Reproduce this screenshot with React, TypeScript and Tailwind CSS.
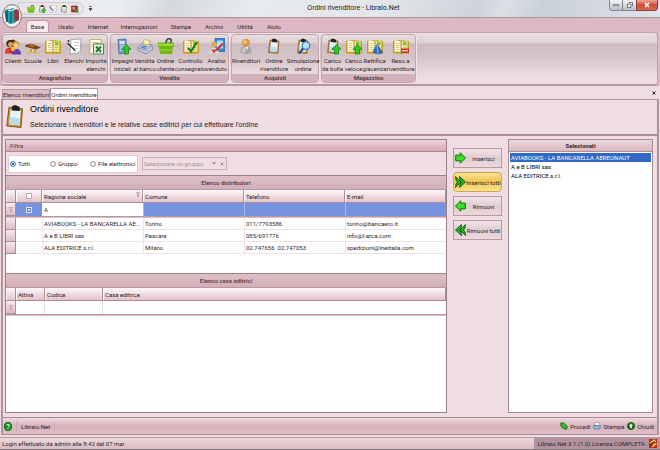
import { useState } from "react";
import type { ReactNode } from "react";

function Svg({ children, className = "h-4 w-4", box = "0 0 16 16" }: { children: ReactNode; className?: string; box?: string }) {
  return (
    <svg viewBox={box} className={`shrink-0 ${className}`} aria-hidden="true">
      {children}
    </svg>
  );
}

const openBook = (
  <>
    <path d="M0 2.500 L7 1.500 L8 2.500 L9 1.500 L16 2.500 V15 H9.500 L8 15.700 L6.500 15 H0Z" fill="#c99a1e" />
    <path d="M1.500 2.500 Q5 1 8 3.500 V14 Q5 12.200 1.500 13.500Z" fill="#fdf8da" />
    <path d="M14.500 2.500 Q11 1 8 3.500 V14 Q11 12.200 14.500 13.500Z" fill="#f3e8a4" />
    <path d="M3 5h3.500M3 7h3.500M3 9h3.500M3 11h3.500" stroke="#c5b475" strokeWidth=".7" />
    <path d="M8 3.500V14" stroke="#a87d14" strokeWidth=".9" />
    <path d="M10 3h3.500v4h-3.500z" fill="#7fc241" />
    <path d="M10 9h3.500M10 11h3.500" stroke="#b9a65e" strokeWidth=".7" />
  </>
);

const clipboard = (
  <>
    <path d="M4 1.500 L13 2.500 L12 15 L2.500 14Z" fill="#c98a2b" stroke="#7b5018" strokeWidth=".6" />
    <path d="M5 3 L11.800 3.700 L11 13.600 L4 12.800Z" fill="#e7f4fc" />
    <path d="M4.500 8 L11.400 9 L11 13.600 L4 12.800Z" fill="#b5dcf3" />
    <path d="M6 .8 L8 0 L11 1.200 L11.200 4 L5.800 3.600Z" fill="#1e2226" />
  </>
);

const upArrow = <path d="M11.500 6 L16 10.800 H13.500 V15.500 H9.500 V10.800 H7Z" fill="#2ecc1f" stroke="#0c720c" strokeWidth=".7" />;

const icons: Record<string, ReactNode> = {
  clients: (
    <>
      <path d="M5 3 Q8 -1 11 3 L13 6 L8 9 L3 7Z" fill="#573012" />
      <circle cx="5" cy="5" r="3.600" fill="#3d2412" />
      <circle cx="5.500" cy="6" r="2.400" fill="#e2a560" />
      <circle cx="11" cy="6" r="3.300" fill="#d6a029" />
      <circle cx="11" cy="7" r="2.200" fill="#f5cf94" />
      <path d="M0 15 Q0 9 5 9 Q9 9 9 15Z" fill="#c3242a" />
      <path d="M7 16 Q7 10.500 11.500 10.500 Q16 10.500 16 16Z" fill="#6a38ae" />
      <circle cx="3" cy="12.500" r="2.400" fill="#ee3b35" />
      <circle cx="8" cy="10.500" r="2.200" fill="#f0c437" />
    </>
  ),
  school: (
    <>
      <path d="M0 7 Q5 4 9 6 L16 9 L11 11 Q5 9.500 0 8Z" fill="#7b4715" />
      <path d="M3 6.500 Q7 4.500 10 7 L8 9Z" fill="#a96d2c" />
      <path d="M3 10.500 L13 12 L12 14 L4 13.500Z" fill="#e6cd7a" />
      <path d="M1 14.500h14" stroke="#c2bd6c" strokeWidth="1.500" strokeDasharray="2 .6" />
      <path d="M6 10.500v3M10 11v3" stroke="#8c5d2c" strokeWidth=".8" />
    </>
  ),
  book: openBook,
  list: (
    <>
      <path d="M5 1 L15 .5 L14 14 L4 15.500Z" fill="#fff" stroke="#8f98a4" strokeWidth=".8" />
      <path d="M8 4h5M8 7h5M7 10h5" stroke="#b8c0ce" strokeWidth=".8" />
      <path d="M2 4 L9 11 L10 13 L8 12 L1 5Z" fill="#2d3339" />
      <circle cx="2.500" cy="2.500" r="1" fill="#333" />
      <path d="M11 13 L14.500 11.500 L14 15Z" fill="#d0d5de" />
    </>
  ),
  excel: (
    <>
      <path d="M2 1h11v4H8v10H2z" fill="#fffceb" stroke="#b4975c" strokeWidth=".7" />
      <path d="M3.500 4h7M3.500 6h4M3.500 8h3" stroke="#d2b36b" strokeWidth=".8" />
      <path d="M5.500 5.500h10v10h-10z" fill="#eaf7e8" stroke="#3f8f4a" />
      <path d="M8 8l5 5.500M13 8l-5 5.500" stroke="#207a30" strokeWidth="2" />
    </>
  ),
  phone: (
    <>
      <path d="M3 1 L11 .5 L11.500 14 L4 15.500Z" fill="#7a9fd0" stroke="#41659b" strokeWidth=".8" />
      <path d="M4.500 2.500h5v3h-5z" fill="#d4ebff" />
      <path d="M5 7.500h5M5 9.500h5M5 11.500h4" stroke="#e9f2ff" strokeWidth="1.200" strokeDasharray="1.300 .7" />
      {upArrow}
    </>
  ),
  till: (
    <>
      <path d="M1 9 L6 4 L15 6.500 L15.500 11 L9 15.500 L1 12Z" fill="#c0c9dd" stroke="#6c7895" strokeWidth=".7" />
      <path d="M1 9 L9 12 L15 6.500" fill="none" stroke="#7887aa" strokeWidth=".8" />
      <path d="M7 1 L13 2 L12 6.500 L6 5Z" fill="#fff4b0" stroke="#b59a3c" strokeWidth=".6" />
      <path d="M5 7l5 1.500M4 8.500l5 1.500" stroke="#4765ad" />
    </>
  ),
  basket: (
    <>
      <path d="M8 5 Q8 0 12 0 Q14.500 1 12 5" fill="none" stroke="#38473e" strokeWidth="1.500" />
      <path d="M0 4.500h16v3.500H0z" fill="#9bdf22" stroke="#4b8f0c" strokeWidth=".6" />
      <path d="M1 8h14l-1 7.500H2z" fill="#6fb915" />
      <path d="M2 11.500h12" stroke="#8ed02f" strokeWidth="1.500" />
    </>
  ),
  bookCheck: (
    <>
      {openBook}
      <path d="M5 9.500 L8 13 L14 3.500" fill="none" stroke="#15801e" strokeWidth="2.200" />
    </>
  ),
  chart: (
    <>
      <path d="M6 0h10v13H6z" fill="#3488d6" stroke="#195189" strokeWidth=".6" />
      <path d="M8 2h6v8H8z" fill="#acdcff" />
      <circle cx="5" cy="6" r="3" fill="#e7a563" />
      <path d="M0 15 Q1 9 5 9 Q9 9 10 15Z" fill="#d8dee9" />
      <path d="M7 12 L14 5" stroke="#d82525" strokeWidth="2" />
      <path d="M2 11 L5 15 L8 11Z" fill="#db4330" />
    </>
  ),
  person: (
    <>
      <path d="M2.500 14 Q2 7.500 8 7.500 Q14 7.500 13.500 14 Q8 17.500 2.500 14Z" fill="#a4a5aa" />
      <path d="M4 13 Q4 9 7 8.500 L7 15Z" fill="#c9cacf" />
      <path d="M7.500 8.500 L10 8.500 L9 12Z" fill="#fff" />
      <circle cx="8" cy="4.200" r="3.900" fill="#d79a45" />
      <circle cx="7" cy="3.500" r="2" fill="#f1c278" />
    </>
  ),
  clip: clipboard,
  clipSearch: (
    <>
      {clipboard}
      <path d="M8.500 9.500 L4 15" stroke="#244f89" strokeWidth="2" />
      <circle cx="11" cy="7" r="3.800" fill="#b9e2ff" fillOpacity=".9" stroke="#3b75b4" strokeWidth="1.200" />
    </>
  ),
  clipUp: (
    <>
      {clipboard}
      {upArrow}
    </>
  ),
  bookUp: (
    <>
      {openBook}
      {upArrow}
    </>
  ),
  bookEdit: (
    <>
      {openBook}
      <path d="M10 6 L15.500 14 L11 15.500 L6 13.500Z" fill="#2f70d7" stroke="#173f91" strokeWidth=".7" />
      <path d="M10 6 L11 15.500" stroke="#8cbcff" />
    </>
  ),
  bookMinus: (
    <>
      {openBook}
      <path d="M8 10h8v4.500H8z" fill="#cf2b22" />
      <path d="M9 12.200h6" stroke="#fff" strokeWidth="1.200" />
    </>
  ),
  redBook: (
    <>
      <path d="M1 2h12v12H1z" fill="#a33a35" stroke="#5e1d1c" />
      <path d="M3 4h5v5H3z" fill="#d99a56" />
      <path d="M9 9h6v6H9z" fill="#4f9a32" />
    </>
  ),
};

type Tool = { icon: string; label: [string, string?]; width: string };
type Group = { title: string; width: string; tools: Tool[] };

const groups: Group[] = [
  {
    title: "Anagrafiche",
    width: "w-[106px]",
    tools: [
      { icon: "clients", label: ["Clienti"], width: "w-5" },
      { icon: "school", label: ["Scuole"], width: "w-5" },
      { icon: "book", label: ["Libri"], width: "w-5" },
      { icon: "list", label: ["Elenchi"], width: "w-[22px]" },
      { icon: "excel", label: ["Importa", "elenchi"], width: "w-[22px]" },
    ],
  },
  {
    title: "Vendite",
    width: "w-[119px]",
    tools: [
      { icon: "phone", label: ["Impegni", "iniziali"], width: "w-[22px]" },
      { icon: "till", label: ["Vendita", "al banco"], width: "w-[22px]" },
      { icon: "basket", label: ["Ordine", "cliente"], width: "w-5" },
      { icon: "bookCheck", label: ["Controllo", "consegnato"], width: "w-[30px]" },
      { icon: "chart", label: ["Analisi", "venduto"], width: "w-[22px]" },
    ],
  },
  {
    title: "Acquisti",
    width: "w-[88px]",
    tools: [
      { icon: "person", label: ["Rivenditori"], width: "w-7" },
      { icon: "clip", label: ["Ordine", "rivenditore"], width: "w-7" },
      { icon: "clipSearch", label: ["Simulazione", "ordine"], width: "w-[30px]" },
    ],
  },
  {
    title: "Magazzino",
    width: "w-[95px]",
    tools: [
      { icon: "clipUp", label: ["Carico", "da bolla"], width: "w-[22px]" },
      { icon: "bookUp", label: ["Carico", "veloce"], width: "w-5" },
      { icon: "bookEdit", label: ["Rettifica", "giacenza"], width: "w-[22px]" },
      { icon: "bookMinus", label: ["Reso a", "rivenditore"], width: "w-[30px]" },
    ],
  },
];

const menu = [
  { name: "Base", width: "w-[23px]" },
  { name: "Usato", width: "w-[34px]" },
  { name: "Internet", width: "w-[30px]" },
  { name: "Interrogazioni", width: "w-[52px]" },
  { name: "Stampe", width: "w-8" },
  { name: "Archivi", width: "w-[34px]" },
  { name: "Utilità", width: "w-7" },
  { name: "Aiuto", width: "w-[30px]" },
];

const distributors = [
  ["AVIABOOKS - LA BANCARELLA AEREONAUT", "Torino", "011/7793586", "torino@bancaero.it"],
  ["A e B LIBRI sas", "Pescara", "085/691776", "info@l-arca.com"],
  ["ALA EDITRICE s.r.l.", "Milano", "02.747656  02.747053", "spedizioni@lneitalia.com"],
];

const headCell =
  "h-[13px] border-r border-b border-[#b08d96] bg-linear-to-b from-[#fdf8f9] to-[#e3c3ca] px-0.5 text-left font-normal text-[#221a1d] shadow-[inset_1px_0_#ffffff]";
const markCell = "border-r border-b border-[#b08d96] bg-linear-to-b from-[#f8eaed] to-[#ddbdc5] p-0";

function Funnel({ className = "" }: { className?: string }) {
  return (
    <Svg className={`h-[5px] w-1 ${className}`} box="0 0 4 5">
      <path d="M.5 .5h3L2.500 2.500v2h-1v-2z" fill="#f6e8ec" stroke="#8f6f79" strokeWidth=".5" />
    </Svg>
  );
}

function SectionTitle({ children }: { children: ReactNode }) {
  return (
    <h2 className="flex h-[15px] items-center justify-center border-y border-t-[#a0828b] border-b-[#bb98a1] bg-linear-to-b from-[#dfbfc6] to-[#d2afb8] font-bold text-[#6e434f]">
      {children}
    </h2>
  );
}

function MoveArrow({ left, double }: { left?: boolean; double?: boolean }) {
  return (
    <Svg className={`h-3 w-[11px] ${left ? "-scale-x-100" : ""}`} box="0 0 11 12">
      {double ? (
        <g fill="#22b51c" stroke="#0a5a10" strokeWidth=".9">
          <path d="M.5 .5 L6 6 L.5 11.500 L1 8 L2.500 6 L1 4Z" />
          <path d="M4.500 .5 L10.500 6 L4.500 11.500 L5 8 L6.500 6 L5 4Z" />
        </g>
      ) : (
        <path d="M.7 3.200h4.500V.8L10.500 6 L5.200 11.200V8.800H.7z" fill="#37e222" stroke="#0b7010" />
      )}
    </Svg>
  );
}

const moves = [
  { label: "Inserisci", left: false, double: false },
  { label: "Inserisci tutti", left: false, double: true },
  { label: "Rimuovi", left: true, double: false },
  { label: "Rimuovi tutti", left: true, double: true },
];

function TitleBar() {
  const quick = ["basket", "clipUp", "list", "clip", "redBook"];
  return (
    <header className="relative flex h-[17px] shrink-0 items-center justify-between bg-[linear-gradient(115deg,#e3e2e6_0%,#eceff1_18%,#d5d9df_26%,#e8ebee_38%,#e2e6ea_58%,#cdd3d9_72%,#dbe0e5_76%,#c9d0d7_82%,#dfe4e8_100%)]">
      <div className="ml-[18px] flex h-[13px] items-center gap-[3px] rounded-r-full border border-[#d2cbd1] bg-[#e9e4e8] pr-1 pl-2">
        {quick.map((name) => (
          <button key={name} type="button" aria-label={name} className="block">
            <Svg className="h-2 w-2">{icons[name]}</Svg>
          </button>
        ))}
      </div>
      <button type="button" aria-label="Personalizza" className="ml-1 block">
        <Svg className="h-[5px] w-[5px]" box="0 0 5 5">
          <path d="M1 .5h3M1 2.500h3L2.500 4.500z" stroke="#444" strokeWidth=".7" />
        </Svg>
      </button>
      <h1 className="flex-1 pl-[126px] text-center text-[7px] text-[#1c1c1c]">Ordini rivenditore - Libraio.Net</h1>
      <div className="mr-0.5 flex h-[11px] w-[170px] justify-end self-start">
        <button type="button" aria-label="Riduci" className="flex w-3.5 items-center justify-center rounded-bl-sm border border-t-0 border-[#85898f] bg-linear-to-b from-[#f5f6f8] to-[#b9bfc8]">
          <Svg className="h-1 w-1.5" box="0 0 6 4"><path d="M.5 1.500h5v1.500h-5z" fill="#fff" stroke="#555" strokeWidth=".7" /></Svg>
        </button>
        <button type="button" aria-label="Ripristina" className="flex w-[13px] items-center justify-center border-b border-[#85898f] bg-linear-to-b from-[#f5f6f8] to-[#b9bfc8]">
          <Svg className="h-1.5 w-1.5" box="0 0 6 6"><path d="M2 .5h3.500v3.500M.5 2h3.500v3.500h-3.500z" fill="#fff" stroke="#555" strokeWidth=".8" /></Svg>
        </button>
        <button type="button" aria-label="Chiudi finestra" className="flex w-[22px] items-center justify-center rounded-br-sm border border-t-0 border-[#8b4138] bg-linear-to-b from-[#e9a99b] via-[#cf4a34] to-[#d66a52]">
          <Svg className="h-1.5 w-1.5" box="0 0 6 6"><path d="M1 1l4 4M5 1l-4 4" stroke="#fff" strokeWidth="1.500" /></Svg>
        </button>
      </div>
      <button type="button" aria-label="Menu principale" className="absolute top-1 left-0.5 z-10 block">
        <Svg className="h-6 w-5" box="0 0 20 24">
          <ellipse cx="10" cy="12" rx="9.500" ry="11.500" fill="#e4dfe2" stroke="#8b7c82" />
          <ellipse cx="10" cy="12" rx="8.200" ry="10.200" fill="#f5f1f3" />
          <path d="M2.500 7 L6 5 L8 6 V19 L4 17.500Z" fill="#17757e" />
          <path d="M6 6 L11 4 L13 5 V19 L8 20 L6 19Z" fill="#269fa6" />
          <path d="M12 6 L15 5 L17 7 V16 L12.500 18.500Z" fill="#8e3a3f" />
          <path d="M9 7v12M5 8v9.500" stroke="#0b4a56" />
          <path d="M6 6l3 1 4-2" fill="none" stroke="#e8ffff" />
        </Svg>
      </button>
    </header>
  );
}

function Ribbon() {
  return (
    <>
      <nav className="flex h-[15px] shrink-0 items-end border-t border-[#a9959b] bg-[#dcb9c2] pl-[26px]">
        {menu.map((m, i) => (
          <button
            key={m.name}
            type="button"
            className={`h-3 shrink-0 whitespace-nowrap text-center ${m.width} ${
              i === 0 ? "rounded-t-sm border border-b-0 border-[#bf9aa4] bg-[#f6e8eb]" : ""
            }`}
          >
            {m.name}
          </button>
        ))}
      </nav>
      <div className="shrink-0 bg-[#dcb9c2] pr-0.5 pl-px">
        <div className="flex h-[54px] gap-0.5 rounded-sm border border-b-2 border-[#c4a2ab] border-b-[#b39aa1] bg-[linear-gradient(to_bottom,#eadfe1_0%,#e0d2d5_18%,#cdbbbf_22%,#d3c3c7_45%,#eadade_80%,#efdde1_100%)] pt-px pb-px">
          {groups.map((g) => (
            <section key={g.title} className={`flex shrink-0 flex-col rounded-sm border border-[#c3a6ae] shadow-[1px_0_#f3e6e9] ${g.width}`}>
              <div className="flex flex-1 items-start justify-center pt-[3px]">
                {g.tools.map((t) => (
                  <button key={t.label.join(" ")} type="button" className={`flex shrink-0 flex-col items-center ${t.width}`}>
                    <Svg className="h-[17px] w-4">{icons[t.icon]}</Svg>
                    <span className="mt-0.5 leading-2 whitespace-nowrap">
                      {t.label[0]}
                      {t.label[1] && (
                        <>
                          <br />
                          {t.label[1]}
                        </>
                      )}
                    </span>
                  </button>
                ))}
              </div>
              <h2 className="h-2 bg-[#d3b3bb] text-center leading-2 font-bold text-[#553f46]">{g.title}</h2>
            </section>
          ))}
        </div>
      </div>
    </>
  );
}

function Filter() {
  const [mode, setMode] = useState("Tutti");
  const options = [
    { name: "Tutti", width: "w-10" },
    { name: "Gruppo", width: "w-10" },
    { name: "File elettronici", width: "w-auto" },
  ];
  return (
    <section>
      <h2 className="flex h-3 items-center border-b border-[#a88b93] bg-linear-to-b from-[#ecd6db] to-[#d4a9b4] pl-1 text-[#4c3a40]">Filtra</h2>
      <div className="flex h-[23px] items-center gap-1 pl-0.5">
        <fieldset className="flex h-[18px] w-[130px] items-center border border-[#dfcdd2] bg-white pl-px">
          {options.map((o) => (
            <label key={o.name} className={`flex items-center gap-0.5 whitespace-nowrap ${o.width}`}>
              <input
                type="radio"
                name="filtro"
                checked={mode === o.name}
                onChange={() => setMode(o.name)}
                className="h-1.5 w-1.5 appearance-none rounded-full border border-[#8f9aa5] bg-[#f0f0f0] checked:border-[#5b87a8] checked:bg-[radial-gradient(#1f6b9e_45%,#cfe4f2_50%)]"
              />
              {o.name}
            </label>
          ))}
        </fieldset>
        <div className="flex h-[13px] w-[85px] items-center border border-[#c9b0b7] text-[#a5939a]">
          <select disabled aria-label="Gruppo" className="h-full flex-1 appearance-none px-px">
            <option>Selezionare un gruppo</option>
          </select>
          <Svg className="mx-0.5 h-[3px] w-1" box="0 0 4 3"><path d="M0 .5h4L2 2.500z" fill="#8f7a82" /></Svg>
          <Svg className="mx-0.5 h-1 w-1" box="0 0 4 4"><path d="M.5 .5l3 3M3.500 .5l-3 3" stroke="#8f7a82" strokeWidth=".8" /></Svg>
        </div>
      </div>
    </section>
  );
}

function Distributors() {
  return (
    <section className="min-h-[98px]">
      <SectionTitle>Elenco distributori</SectionTitle>
      <table className="w-full table-fixed border-separate border-spacing-0">
        <colgroup>
          <col className="w-[10px]" />
          <col className="w-[26px]" />
          <col />
          <col />
          <col />
          <col />
        </colgroup>
        <thead>
          <tr>
            <th className={headCell} />
            <th className={headCell}>
              <input type="checkbox" aria-label="Seleziona tutti" className="mx-auto block h-1.5 w-1.5 appearance-none border border-[#b5b0b8] bg-white" />
            </th>
            <th className={headCell}>
              <span className="flex items-start justify-between">
                Ragione sociale
                <Funnel />
              </span>
            </th>
            <th className={headCell}>Comune</th>
            <th className={headCell}>Telefono</th>
            <th className={headCell}>E-mail</th>
          </tr>
        </thead>
        <tbody>
          <tr>
            <td className={`${markCell} h-[13px]`}><Funnel className="mx-auto" /></td>
            <td className="bg-[#7793df] p-0">
              <input type="checkbox" aria-label="Filtro selezione" className="mx-auto block h-1.5 w-1.5 appearance-none border border-[#dfe7fa] bg-[radial-gradient(#dfe7fa_30%,#5f7cc4_35%)]" />
            </td>
            <td className="bg-white p-0">
              <input aria-label="Filtro ragione sociale" defaultValue="A" className="block h-[13px] w-full px-0.5 outline-none" />
            </td>
            {[0, 1, 2].map((n) => (
              <td key={n} className="border-l border-[#a9b9ea] bg-[#7793df]" />
            ))}
          </tr>
          <tr>
            <td colSpan={6} className="h-0.5 border-t border-[#b9979f] bg-[#dcc0c7] p-0" />
          </tr>
          {distributors.map((row) => (
            <tr key={row[0]}>
              <td className={`${markCell} h-3`} />
              <td className="border-b border-[#f0e2e5] p-0" />
              {row.map((cell) => (
                <td key={cell} className="truncate border-b border-l border-[#f0e2e5] px-px py-0 whitespace-pre">
                  {cell}
                </td>
              ))}
            </tr>
          ))}
        </tbody>
      </table>
    </section>
  );
}

function Publishers() {
  return (
    <section className="flex-1">
      <SectionTitle>Elenco case editrici</SectionTitle>
      <table className="w-full table-fixed border-separate border-spacing-0">
        <colgroup>
          <col className="w-[10px]" />
          <col className="w-[29px]" />
          <col className="w-[58px]" />
          <col />
        </colgroup>
        <thead>
          <tr>
            <th className={headCell} />
            <th className={headCell}>Attiva</th>
            <th className={headCell}>Codice</th>
            <th className={headCell}>Casa editrice</th>
          </tr>
        </thead>
        <tbody>
          <tr>
            <td className={`${markCell} h-[13px]`}><Funnel className="mx-auto" /></td>
            <td className="border-r border-[#ead9dd]" />
            <td className="border-r border-[#ead9dd]" />
            <td />
          </tr>
          <tr>
            <td colSpan={4} className="h-0.5 border-t border-[#b9979f] bg-[#dcc0c7] p-0" />
          </tr>
        </tbody>
      </table>
    </section>
  );
}

export default function App() {
  const [selected, setSelected] = useState(0);
  return (
    <div className="flex min-h-screen flex-col overflow-hidden bg-[#efdde1] font-[Roboto,'Liberation_Sans',sans-serif] text-[6px] leading-[9px] text-[#30242a]">
      <TitleBar />
      <Ribbon />

      <div className="flex h-[13px] shrink-0 items-end pr-1 pl-0.5">
        <button type="button" className="h-[10px] w-12 border border-b-0 border-[#b5949d] bg-[#dcbec6] whitespace-nowrap">Elenco rivenditori</button>
        <button type="button" className="h-[11px] w-12 border border-b-0 border-[#b5949d] bg-white whitespace-nowrap">Ordini rivenditore</button>
        <button type="button" aria-label="Chiudi scheda" className="mb-1 ml-auto block">
          <Svg className="h-1 w-1" box="0 0 4 4"><path d="M.5 .5l3 3M3.500 .5l-3 3" stroke="#222" /></Svg>
        </button>
      </div>

      <main className="mx-px flex flex-1 flex-col border-x-2 border-t border-[#b0949c]">
        <div className="flex h-[36px] shrink-0 items-center gap-1.5 border-b-2 border-[#a88b93] pl-[3px] font-['Liberation_Sans',Arial,sans-serif]">
          <Svg className="h-7 w-[18px]" box="2 -1 12 18">{clipboard}</Svg>
          <div>
            <h2 className="text-[9px] leading-4 text-black">Ordini rivenditore</h2>
            <p className="text-[7px] leading-4 text-[#1f171a]">Selezionare i rivenditori e le relative case editrici per cui effettuare l'ordine</p>
          </div>
        </div>

        <div className="flex flex-1 gap-1.5 px-0.5 pt-[3px] pb-1 pr-1">
          <div className="flex flex-1 flex-col border border-[#9b7f87] bg-white">
            <div className="bg-[#efdde1]">
              <Filter />
            </div>
            <Distributors />
            <Publishers />
          </div>

          <div className="flex w-[49px] shrink-0 flex-col gap-1 pt-[9px]">
            {moves.map((m) => (
              <button
                key={m.label}
                type="button"
                className={`flex h-5 items-center border pl-px ${
                  m.label === "Inserisci tutti"
                    ? "rounded-sm border-[#c9a55d] bg-linear-to-b from-[#fbe08f] via-[#f3c34c] to-[#fbe38d]"
                    : "border-[#b898a1] bg-linear-to-b from-[#f3e4e7] via-[#dfcdd1] to-[#edd9dd]"
                }`}
              >
                <MoveArrow left={m.left} double={m.double} />
                <span className="flex-1 text-center whitespace-nowrap">{m.label}</span>
              </button>
            ))}
          </div>

          <section className="w-[145px] shrink-0 border border-[#a88b93] bg-white">
            <h2 className="flex h-3 items-center justify-center border-b border-[#b08d96] bg-linear-to-b from-[#ecd9dd] to-[#dbb8c0] font-bold">Selezionati</h2>
            <ul className="p-px">
              {distributors.map((row, i) => (
                <li key={row[0]}>
                  <button
                    type="button"
                    onClick={() => setSelected(i)}
                    className={`block h-[9px] w-full px-px text-left whitespace-nowrap ${selected === i ? "bg-[#316ac5] text-white" : "text-black"}`}
                  >
                    {row[0]}
                  </button>
                </li>
              ))}
            </ul>
          </section>
        </div>

        <div className="flex h-[18px] shrink-0 items-center gap-1 border-y border-[#a88b93] bg-linear-to-b from-[#efd9de] via-[#d8b2bb] to-[#e0bec6] pl-px">
          <button type="button" aria-label="Guida" className="block">
            <Svg className="h-[9px] w-2" box="0 0 8 9">
              <ellipse cx="4" cy="4.500" rx="3.600" ry="4.200" fill="#159a20" stroke="#073f0b" strokeWidth=".7" />
              <path d="M2.500 3 Q4 1.500 5.500 3 Q5.500 4.500 4 5M4 6v1.200" fill="none" stroke="#d8ffd8" />
            </Svg>
          </button>
          <span className="border-x border-[#cdaab3] px-1">Libraio.Net</span>
          <div className="ml-auto flex items-center gap-[3px] pr-[3px]">
            <button type="button" className="flex items-center gap-0.5">
              <Svg className="h-2 w-2" box="0 0 8 8"><path d="M1 .8 L4.500 1.500 L7.500 5 L6 7.500 L2.500 6 L.5 3Z" fill="#35bd25" stroke="#0d5d10" strokeWidth=".8" /></Svg>
              Procedi
            </button>
            <button type="button" className="flex items-center gap-0.5">
              <Svg className="h-2 w-2" box="0 0 8 8">
                <path d="M2 .5h4v3H2z" fill="#fff" stroke="#66839e" strokeWidth=".5" />
                <path d="M.5 3.500h7L7 7H1z" fill="#8eb6d6" stroke="#406b92" strokeWidth=".6" />
              </Svg>
              Stampa
            </button>
            <button type="button" className="flex items-center gap-0.5">
              <Svg className="h-2 w-2" box="0 0 8 8">
                <circle cx="4" cy="4" r="3.500" fill="#17761c" stroke="#073f0b" strokeWidth=".7" />
                <path d="M4 1.500 L6 4H5v2H3V4H2z" fill="#d5ffd5" />
              </Svg>
              Chiudi
            </button>
          </div>
        </div>
      </main>

      <footer className="mt-0.5 flex h-[13px] shrink-0 items-center justify-between border-y border-[#b49aa1] border-b-[#8f7c82] bg-linear-to-b from-[#eddadd] to-[#d9bcc3] pl-0.5">
        <span>Login effettuato da admin alle 8:42 del 07 mar</span>
        <span className="flex h-full items-center gap-1 bg-[#b393a0] pr-[3px] pl-[3px]">
          Libraio.Net 3.1.(1.0) Licenza COMPLETA
          <Svg className="h-[9px] w-2" box="0 0 8 9">
            <path d="M0 0h8v9H0z" fill="#c32517" />
            <path d="M1 4 L5 1 L6.500 2.500 L3 5 L7 5 L3 8" fill="none" stroke="#f6d04e" strokeWidth="1.200" />
            <path d="M1 6l5-3" stroke="#2b0906" />
          </Svg>
        </span>
      </footer>
    </div>
  );
}
